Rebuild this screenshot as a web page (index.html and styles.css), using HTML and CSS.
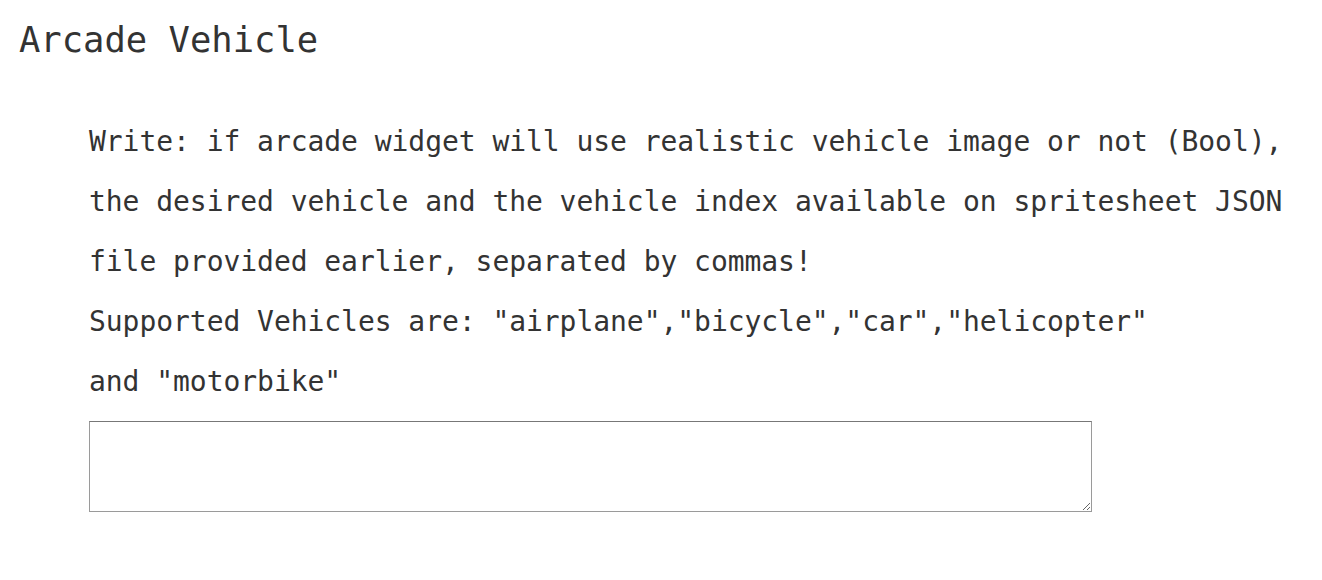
FILE: index.html
```html
<!DOCTYPE html>
<html lang="en">
<head>
<meta charset="utf-8">
<title>Arcade Vehicle</title>
<link rel="stylesheet" href="styles.css">
</head>
<body>
<main class="page">
  <h1 class="title">Arcade Vehicle</h1>
  <section class="question">
    <p class="prompt">Write: if arcade widget will use realistic vehicle image or not (Bool),<br>the desired vehicle and the vehicle index available on spritesheet JSON<br>file provided earlier, separated by commas!<br>Supported Vehicles are: "airplane","bicycle","car","helicopter"<br>and "motorbike"</p>
    <textarea class="answer"></textarea>
  </section>
</main>
</body>
</html>
```

FILE: styles.css
```css
html, body {
  margin: 0;
  padding: 0;
  background: #ffffff;
}

.page {
  font-family: "DejaVu Sans Mono", "Liberation Mono", monospace;
  color: #333333;
  padding: 18px 0 0 19px;
}

.title {
  margin: 0;
  font-size: 35.5px;
  font-weight: normal;
  line-height: 44px;
}

.question {
  margin: 50px 0 0 70px;
  display: flex;
  flex-direction: column;
  align-items: flex-start;
}

.prompt {
  margin: 0;
  font-size: 28px;
  letter-spacing: -0.05px;
  line-height: 60px;
  white-space: nowrap;
}

.answer {
  margin: 9px 0 0 0;
  box-sizing: border-box;
  width: 1003px;
  height: 91px;
  border: 1px solid #9a9a9a;
  border-top-color: #777777;
  padding: 2px;
  font-family: "DejaVu Sans Mono", monospace;
  font-size: 14px;
  resize: both;
  background: #ffffff;
}
```
